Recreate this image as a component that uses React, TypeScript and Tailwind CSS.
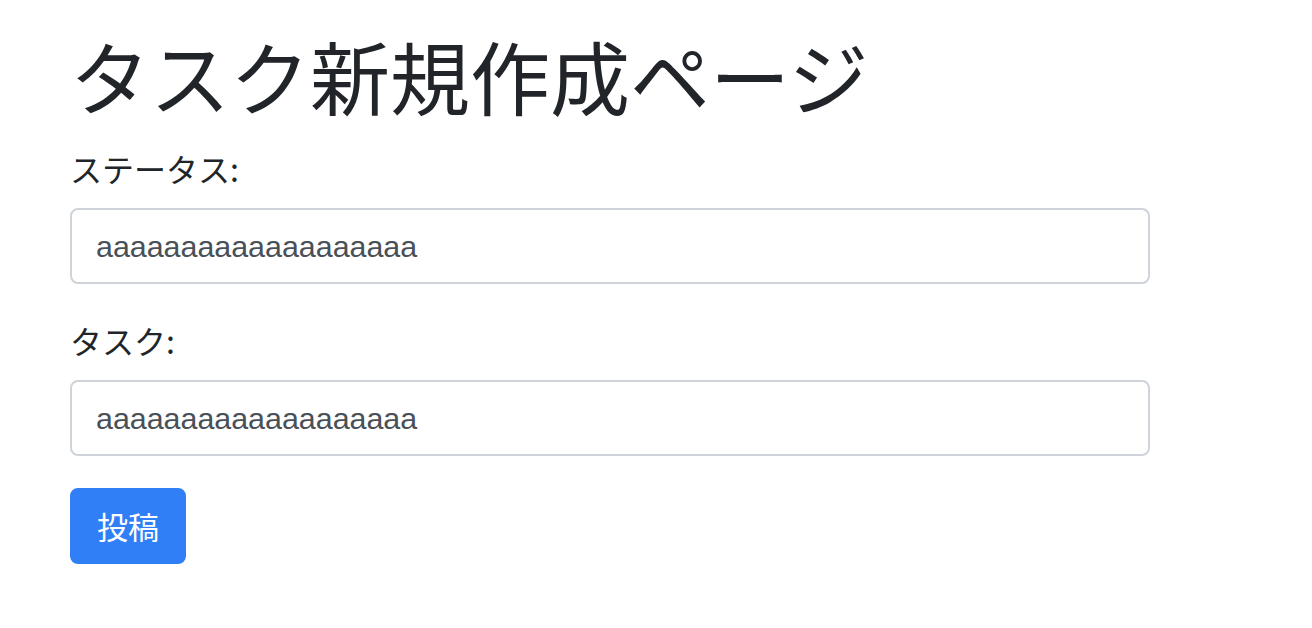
import React from 'react';

const fields = [
  { id: 'status', label: 'ステータス:', value: 'aaaaaaaaaaaaaaaaaaa' },
  { id: 'task', label: 'タスク:', value: 'aaaaaaaaaaaaaaaaaaa' },
];

const App: React.FC = () => {
  return (
    <div className="min-h-screen bg-white text-[#212529] font-['Liberation_Sans','Noto_Sans_CJK_JP',sans-serif]">
      <div className="pl-[70px] pt-[26px] w-[1150px]">
        <h1 className="text-[80px] leading-[96px] mb-[22px] font-normal font-['Noto_Sans_CJK_JP',sans-serif]">
          タスク新規作成ページ
        </h1>
        <form>
          {fields.map((f) => (
            <div key={f.id} className="mb-[32px]">
              <label
                htmlFor={f.id}
                className="block text-[32px] leading-[48px] mb-[16px] font-['Noto_Sans_CJK_JP',sans-serif]"
              >
                {f.label}
              </label>
              <input
                id={f.id}
                type="text"
                defaultValue={f.value}
                className="block w-[1080px] h-[76px] border-2 border-[#ced4da] rounded-[8px] px-[24px] text-[30.4px] text-[#495057] outline-none font-['Liberation_Sans',sans-serif]"
              />
            </div>
          ))}
          <button
            type="button"
            className="h-[76px] w-[116px] rounded-[8px] bg-[#307ff6] border-2 border-[#307ff6] text-white text-[31px] leading-[48px] font-['Noto_Sans_CJK_JP',sans-serif]"
          >
            投稿
          </button>
        </form>
      </div>
    </div>
  );
};

export default App;
